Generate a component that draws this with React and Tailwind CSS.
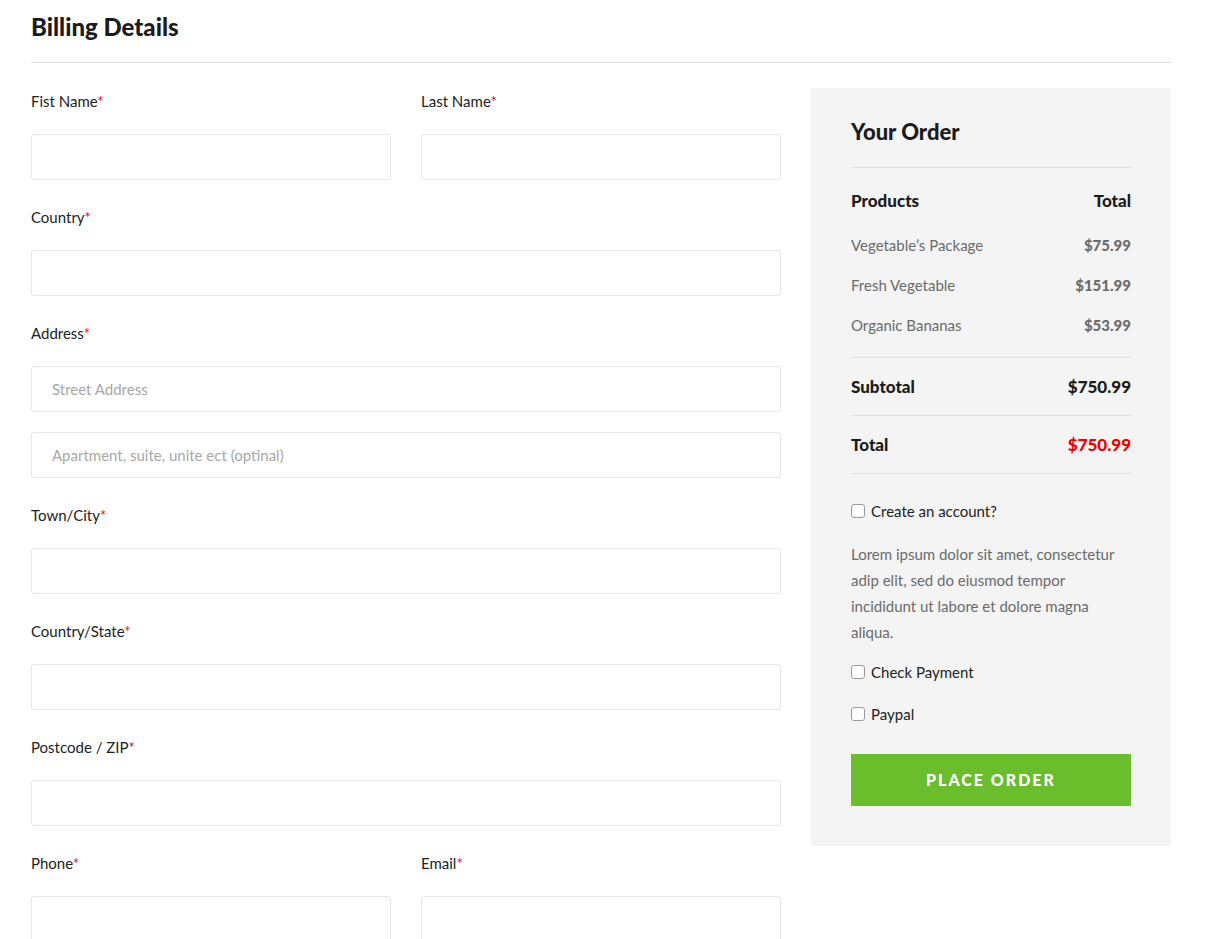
const Label = ({ children }) => (
  <label className="block text-[15px] leading-[26px] text-[#222] mb-[20px]">
    {children}
    <span className="text-[#ff0000]">*</span>
  </label>
);

const Input = ({ placeholder, className = '' }) => (
  <input
    type="text"
    placeholder={placeholder}
    className={`block w-full h-[46px] px-[20px] bg-white border border-[#e6e6e6] rounded-[3px] text-[15px] text-[#222] placeholder:text-[#a8a8a8] outline-none ${className}`}
  />
);

const Field = ({ label, placeholder }) => (
  <div className="mb-[24px]">
    <Label>{label}</Label>
    <Input placeholder={placeholder} />
  </div>
);

const Check = ({ label, className = '' }) => (
  <label className={`flex items-center gap-[6px] text-[15px] leading-[24px] text-[#222] ${className}`}>
    <input type="checkbox" className="w-[14px] h-[14px] m-0 appearance-none border border-[#9a9a9a] rounded-[3px] bg-white" />
    {label}
  </label>
);

export default function App() {
  const items = [
    { name: 'Vegetable’s Package', price: '$75.99' },
    { name: 'Fresh Vegetable', price: '$151.99' },
    { name: 'Organic Bananas', price: '$53.99' },
  ];

  return (
    <div className="bg-white min-h-screen font-['Lato',sans-serif]">
      <div className="w-[1140px] ml-[31px]">
        <h3 className="pt-[12px] text-[24px] leading-[30px] font-black text-[#1b1b1b] mb-[20px]">Billing Details</h3>
        <div className="h-px bg-[#e0e0e0] mb-[25px]" />

        <div className="flex gap-[30px] items-start">
          {/* Billing form */}
          <div className="w-[750px]">
            <div className="grid grid-cols-2 gap-x-[30px]">
              <Field label="Fist Name" />
              <Field label="Last Name" />
            </div>
            <Field label="Country" />
            <div className="mb-[24px]">
              <Label>Address</Label>
              <Input placeholder="Street Address" className="mb-[20px]" />
              <Input placeholder="Apartment, suite, unite ect (optinal)" />
            </div>
            <Field label="Town/City" />
            <Field label="Country/State" />
            <Field label="Postcode / ZIP" />
            <div className="grid grid-cols-2 gap-x-[30px]">
              <Field label="Phone" />
              <Field label="Email" />
            </div>
          </div>

          {/* Order summary */}
          <div className="w-[360px] bg-[#f4f4f4] px-[40px] pt-[29px] pb-[40px]">
            <h4 className="text-[22px] leading-[30px] font-black text-[#1b1b1b] mb-[20px]">Your Order</h4>
            <div className="h-px bg-[#e0e0e0]" />

            <div className="pt-[13px] pb-[12px]">
              <div className="flex justify-between items-center h-[40px] text-[17px] font-black text-[#1b1b1b] mb-[4px]">
                <span>Products</span>
                <span>Total</span>
              </div>
              {items.map((item) => (
                <div key={item.name} className="flex justify-between items-center h-[40px] text-[15px]">
                  <span className="text-[#6b6b6b]">{item.name}</span>
                  <span className="font-black text-[#6b6b6b]">{item.price}</span>
                </div>
              ))}
            </div>
            <div className="h-px bg-[#e0e0e0]" />
            <div className="flex justify-between items-center h-[57px] text-[17px] font-black text-[#1b1b1b]">
              <span>Subtotal</span>
              <span>$750.99</span>
            </div>
            <div className="h-px bg-[#e0e0e0]" />
            <div className="flex justify-between items-center h-[57px] text-[17px] font-black">
              <span className="text-[#1b1b1b]">Total</span>
              <span className="text-[#ee0000]">$750.99</span>
            </div>
            <div className="h-px bg-[#e0e0e0]" />

            <Check label="Create an account?" className="mt-[25px]" />
            <p className="mt-[18px] text-[15px] leading-[26px] text-[#6b6b6b]">
              Lorem ipsum dolor sit amet, consectetur adip elit, sed do eiusmod tempor incididunt ut labore et dolore magna aliqua.
            </p>
            <Check label="Check Payment" className="mt-[15px]" />
            <Check label="Paypal" className="mt-[18px]" />

            <button className="mt-[28px] w-full h-[52px] bg-[#6abd2b] text-white text-[16px] font-black uppercase tracking-[2px]">
              Place Order
            </button>
          </div>
        </div>
      </div>
    </div>
  );
}
